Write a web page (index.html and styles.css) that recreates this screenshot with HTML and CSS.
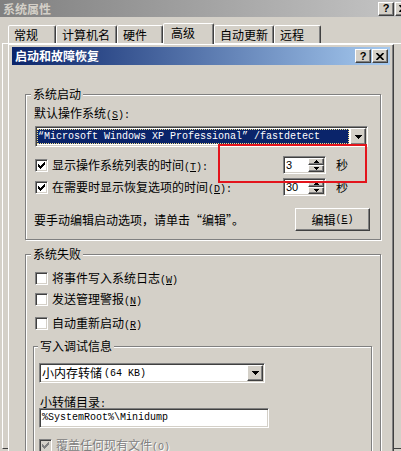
FILE: index.html
```html
<!DOCTYPE html>
<html lang="zh-CN">
<head>
<meta charset="utf-8">
<title>系统属性</title>
<link rel="stylesheet" href="styles.css">
</head>
<body>
<div class="win-title">
  <span class="win-title-text">系统属性</span>
  <div class="cap-btns">
    <span class="cap-btn">?</span>
    <span class="cap-btn"><svg class="x-icon" viewBox="0 0 8 7" width="8" height="7"><path d="M0.5 0 L7.5 7 M7.5 0 L0.5 7" stroke="#000" stroke-width="1.7"/></svg></span>
  </div>
</div>

<div class="tabs">
  <span class="tab tab-w48">常规</span>
  <span class="tab tab-w61">计算机名</span>
  <span class="tab tab-w46">硬件</span>
  <span class="tab tab-w51 tab-sel">高级</span>
  <span class="tab tab-w60">自动更新</span>
  <span class="tab tab-w47">远程</span>
</div>

<div class="panel">
  <div class="dialog">
    <div class="dlg-title">
      <span class="dlg-title-text">启动和故障恢复</span>
      <div class="cap-btns">
        <span class="cap-btn">?</span>
        <span class="cap-btn"><svg class="x-icon" viewBox="0 0 8 7" width="8" height="7"><path d="M0.5 0 L7.5 7 M7.5 0 L0.5 7" stroke="#000" stroke-width="1.7"/></svg></span>
      </div>
    </div>

    <div class="dlg-body">
      <div class="group g1">
        <span class="legend">系统启动</span>
        <div class="label-row">默认操作系统<span class="acc">(<u>S</u>):</span></div>
        <div class="combo combo-os">
          <div class="combo-field combo-field-sel"><span class="sel">“Microsoft Windows XP Professional” /fastdetect</span></div>
          <span class="drop-btn"><svg viewBox="0 0 7 4" width="7" height="4" shape-rendering="crispEdges"><rect x="0" y="0" width="7" height="1"/><rect x="1" y="1" width="5" height="1"/><rect x="2" y="2" width="3" height="1"/><rect x="3" y="3" width="1" height="1"/></svg></span>
        </div>

        <div class="spin-row spin-row-1">
          <div class="check">
            <span class="box"><svg class="tick" viewBox="0 0 7 7" width="7" height="7" shape-rendering="crispEdges"><rect x="6" y="0" width="1" height="1"/><rect x="5" y="1" width="2" height="1"/><rect x="0" y="2" width="1" height="1"/><rect x="4" y="2" width="3" height="1"/><rect x="0" y="3" width="2" height="1"/><rect x="3" y="3" width="3" height="1"/><rect x="0" y="4" width="5" height="1"/><rect x="1" y="5" width="3" height="1"/><rect x="2" y="6" width="1" height="1"/></svg></span>
            <span>显示操作系统列表的时间<span class="acc">(<u>T</u>):</span></span>
          </div>
          <div class="spin">
            <span class="spin-val">3</span>
            <span class="spin-btns">
              <span class="spin-btn"><svg viewBox="0 0 5 3" width="5" height="3" shape-rendering="crispEdges"><rect x="2" y="0" width="1" height="1"/><rect x="1" y="1" width="3" height="1"/><rect x="0" y="2" width="5" height="1"/></svg></span>
              <span class="spin-btn"><svg viewBox="0 0 5 3" width="5" height="3" shape-rendering="crispEdges"><rect x="0" y="0" width="5" height="1"/><rect x="1" y="1" width="3" height="1"/><rect x="2" y="2" width="1" height="1"/></svg></span>
            </span>
          </div>
          <span class="unit">秒</span>
        </div>

        <div class="spin-row spin-row-2">
          <div class="check">
            <span class="box"><svg class="tick" viewBox="0 0 7 7" width="7" height="7" shape-rendering="crispEdges"><rect x="6" y="0" width="1" height="1"/><rect x="5" y="1" width="2" height="1"/><rect x="0" y="2" width="1" height="1"/><rect x="4" y="2" width="3" height="1"/><rect x="0" y="3" width="2" height="1"/><rect x="3" y="3" width="3" height="1"/><rect x="0" y="4" width="5" height="1"/><rect x="1" y="5" width="3" height="1"/><rect x="2" y="6" width="1" height="1"/></svg></span>
            <span>在需要时显示恢复选项的时间<span class="acc">(<u>D</u>):</span></span>
          </div>
          <div class="spin">
            <span class="spin-val">30</span>
            <span class="spin-btns">
              <span class="spin-btn"><svg viewBox="0 0 5 3" width="5" height="3" shape-rendering="crispEdges"><rect x="2" y="0" width="1" height="1"/><rect x="1" y="1" width="3" height="1"/><rect x="0" y="2" width="5" height="1"/></svg></span>
              <span class="spin-btn"><svg viewBox="0 0 5 3" width="5" height="3" shape-rendering="crispEdges"><rect x="0" y="0" width="5" height="1"/><rect x="1" y="1" width="3" height="1"/><rect x="2" y="2" width="1" height="1"/></svg></span>
            </span>
          </div>
          <span class="unit">秒</span>
        </div>

        <div class="edit-row">
          <span>要手动编辑启动选项，请单击“编辑”。</span>
          <span class="btn">编辑<span class="acc">(<u>E</u>)</span></span>
        </div>

        <div class="red-mark"></div>
      </div>

      <div class="group g2">
        <span class="legend">系统失败</span>
        <div class="check check-row c1">
          <span class="box"></span>
          <span>将事件写入系统日志<span class="acc">(<u>W</u>)</span></span>
        </div>
        <div class="check check-row c2">
          <span class="box"></span>
          <span>发送管理警报<span class="acc">(<u>N</u>)</span></span>
        </div>
        <div class="check check-row c3">
          <span class="box"></span>
          <span>自动重新启动<span class="acc">(<u>R</u>)</span></span>
        </div>

        <div class="group g3">
          <span class="legend legend-g3">写入调试信息</span>
          <div class="combo combo-dump">
            <div class="combo-field combo-field-plain">小内存转储<span class="acc acc-gap">(64 KB)</span></div>
            <span class="drop-btn"><svg viewBox="0 0 7 4" width="7" height="4" shape-rendering="crispEdges"><rect x="0" y="0" width="7" height="1"/><rect x="1" y="1" width="5" height="1"/><rect x="2" y="2" width="3" height="1"/><rect x="3" y="3" width="1" height="1"/></svg></span>
          </div>
          <div class="dir-label">小转储目录<span class="acc">:</span></div>
          <div class="field">%SystemRoot%\Minidump</div>
          <div class="check check-row disabled">
            <span class="box box-disabled"><svg class="tick" viewBox="0 0 7 7" width="7" height="7" shape-rendering="crispEdges"><rect x="6" y="0" width="1" height="1"/><rect x="5" y="1" width="2" height="1"/><rect x="0" y="2" width="1" height="1"/><rect x="4" y="2" width="3" height="1"/><rect x="0" y="3" width="2" height="1"/><rect x="3" y="3" width="3" height="1"/><rect x="0" y="4" width="5" height="1"/><rect x="1" y="5" width="3" height="1"/><rect x="2" y="6" width="1" height="1"/></svg></span>
            <span>覆盖任何现有文件<span class="acc">(<u>O</u>)</span></span>
          </div>
        </div>
      </div>
    </div>
  </div>
</div>
</body>
</html>
```

FILE: styles.css
```css
* { box-sizing: border-box; }

html, body { margin: 0; padding: 0; }

body {
  width: 401px;
  height: 451px;
  overflow: hidden;
  background: #d4d0c8;
  color: #000;
  font: 12px/14px "Noto Sans CJK SC", "Liberation Sans", sans-serif;
}

.acc {
  font: 10px "Liberation Mono", monospace;
}

.acc-gap { margin-left: 2px; }

/* outer window caption (inactive), cut off at the right edge */
.win-title {
  height: 17px;
  display: flex;
  align-items: center;
  justify-content: space-between;
  padding-left: 3px;
  overflow: hidden;
  background: linear-gradient(to right, #808080, #c4c4c4);
}

.win-title-text {
  color: #d4d0c8;
  font-weight: bold;
  line-height: 14px;
}

.win-title .cap-btns { margin-right: -10px; flex: none; }

.cap-btns {
  display: flex;
  gap: 1px;
}

.cap-btn {
  flex: none;
  width: 16px;
  height: 14px;
  background: #d4d0c8;
  border: 1px solid;
  border-color: #fff #404040 #404040 #fff;
  box-shadow: inset -1px -1px #808080;
  display: flex;
  align-items: center;
  justify-content: center;
  font: bold 11px/1 "Liberation Sans", sans-serif;
  color: #000;
}

/* tabs */
.tabs {
  height: 26px;
  display: flex;
  align-items: flex-end;
  padding-left: 8px;
  position: relative;
  z-index: 1;
}

.tab {
  height: 18px;
  padding: 2px 0 0 5px;
  border: 1px solid;
  border-bottom: 0;
  border-color: #fff #404040 transparent #fff;
  border-radius: 2px 2px 0 0;
  box-shadow: inset -1px 0 #808080;
  background: #d4d0c8;
  white-space: nowrap;
  line-height: 14px;
}

.tab-sel {
  height: 21px;
  padding: 2px 0 0 7px;
  margin-bottom: -1px;
}

.tab-w48 { width: 48px; }
.tab-w61 { width: 61px; }
.tab-w46 { width: 46px; }
.tab-w51 { width: 51px; }
.tab-w60 { width: 60px; }
.tab-w47 { width: 47px; }

/* tab page */
.panel {
  margin-left: 2px;
  width: 399px;
  height: 406px;
  border-top: 1px solid #fff;
  border-left: 1px solid #fff;
  border-bottom: 1px solid #404040;
}

/* child dialog, cut off at the bottom edge */
.dialog {
  width: 386px;
  margin-left: 5px;
  height: 407px;
  overflow: hidden;
  border: 1px solid;
  border-bottom: 0;
  border-color: #fff #404040 #404040 #fff;
  box-shadow: inset -1px 0 #808080;
  padding: 2px 3px 0 3px;
  background: #d4d0c8;
}

.dlg-title {
  height: 18px;
  display: flex;
  align-items: center;
  justify-content: space-between;
  padding: 0 2px 0 3px;
  background: linear-gradient(to right, #0a246a, #a6caf0);
}

.dlg-title-text {
  color: #fff;
  font-weight: bold;
  line-height: 14px;
}

.dlg-body {
  padding-top: 29px;
}

/* group boxes */
.group {
  position: relative;
  border: 1px solid #808080;
  box-shadow: inset 1px 1px #fff, 1px 1px #fff;
}

.legend {
  display: block;
  width: max-content;
  height: 14px;
  line-height: 14px;
  margin: -8px 0 0 5px;
  padding: 0 2px;
  background: #d4d0c8;
}

.legend-g3 { margin-left: 4px; }

.g1 {
  margin-left: 13px;
  width: 356px;
  padding-bottom: 8px;
}

.g2 {
  margin: 14px 0 0 13px;
  width: 356px;
  height: 260px;
}

.g3 {
  margin: 15px 0 0 7px;
  width: 339px;
  height: 160px;
}

.label-row {
  margin: 5px 0 0 8px;
  height: 14px;
}

/* combo boxes */
.combo {
  display: flex;
  background: #fff;
  border: 1px solid;
  border-color: #808080 #fff #fff #808080;
  box-shadow: inset 1px 1px #404040, inset -1px -1px #d4d0c8;
  padding: 1px;
}

.combo-os {
  margin: 6px 0 0 9px;
  width: 333px;
  height: 21px;
}

.combo-dump {
  margin: 10px 0 0 5px;
  width: 226px;
  height: 20px;
}

.combo-field {
  flex: 1;
  display: flex;
  min-width: 0;
}

.combo-field-sel { padding: 1px 1px 1px 0; }

.combo-field-plain {
  padding-left: 1px;
  align-items: center;
  white-space: nowrap;
}

.sel {
  flex: 1;
  background: #0a246a;
  color: #fff;
  border: 1px dotted #f2e08c;
  font: 10px/13px "Liberation Mono", monospace;
  white-space: nowrap;
  overflow: hidden;
}

.drop-btn {
  width: 16px;
  background: #d4d0c8;
  border: 1px solid;
  border-color: #fff #404040 #404040 #fff;
  box-shadow: inset -1px -1px #808080;
  display: flex;
  align-items: center;
  justify-content: center;
}

.drop-btn svg { fill: #000; }

/* check boxes */
.check {
  display: flex;
  align-items: center;
  gap: 4px;
  white-space: nowrap;
}

.box {
  flex: none;
  width: 13px;
  height: 13px;
  background: #fff;
  border: 1px solid;
  border-color: #808080 #fff #fff #808080;
  box-shadow: inset 1px 1px #404040, inset -1px -1px #d4d0c8;
  display: flex;
  align-items: center;
  justify-content: center;
}

.tick { fill: #000; }

.box-disabled { background: #d4d0c8; }
.box-disabled .tick { fill: #808080; }

.disabled {
  color: #808080;
  text-shadow: 1px 1px 0 #fff;
}

.check-row {
  height: 16px;
  margin-left: 9px;
}

.c1 { margin-top: 9px; }
.c2 { margin-top: 5px; }
.c3 { margin-top: 8px; }

.g3 .check-row {
  margin: 9px 0 0 5px;
}

/* spin rows */
.spin-row {
  display: flex;
  align-items: center;
  height: 18px;
  margin: 9px 32px 0 9px;
}

.spin-row-2 { margin-top: 4px; }

.spin-row .check { flex: 1; }

.spin {
  display: flex;
  width: 43px;
  height: 18px;
  background: #fff;
  border: 1px solid;
  border-color: #808080 #fff #fff #808080;
  box-shadow: inset 1px 1px #404040, inset -1px -1px #d4d0c8;
  padding: 1px;
}

.spin-val {
  flex: 1;
  padding-left: 1px;
  font: 11px/14px "Liberation Sans", sans-serif;
}

.spin-btns {
  width: 16px;
  display: flex;
  flex-direction: column;
}

.spin-btn {
  flex: 1;
  background: #d4d0c8;
  border: 1px solid;
  border-color: #fff #404040 #404040 #fff;
  box-shadow: inset -1px -1px #808080;
  display: flex;
  align-items: center;
  justify-content: center;
}

.spin-btn svg { fill: #000; }

.unit {
  width: 12px;
  margin-left: 10px;
}

/* edit row */
.edit-row {
  display: flex;
  align-items: center;
  justify-content: space-between;
  height: 23px;
  margin: 12px 10px 0 8px;
}

.btn {
  width: 75px;
  height: 23px;
  border: 1px solid;
  border-color: #fff #404040 #404040 #fff;
  box-shadow: inset -1px -1px #808080;
  display: flex;
  align-items: center;
  justify-content: center;
}

/* text field */
.dir-label {
  margin: 13px 0 0 6px;
  height: 12px;
  line-height: 12px;
}

.field {
  margin-left: 5px;
  width: 230px;
  height: 20px;
  background: #fff;
  border: 1px solid;
  border-color: #808080 #fff #fff #808080;
  box-shadow: inset 1px 1px #404040, inset -1px -1px #d4d0c8;
  padding: 1px 0 0 2px;
  font: 10px/16px "Liberation Mono", monospace;
  white-space: nowrap;
}

/* red annotation frame */
.red-mark {
  position: absolute;
  left: 192px;
  top: 49px;
  width: 149px;
  height: 39px;
  border: 2px solid #e3141c;
}
```
